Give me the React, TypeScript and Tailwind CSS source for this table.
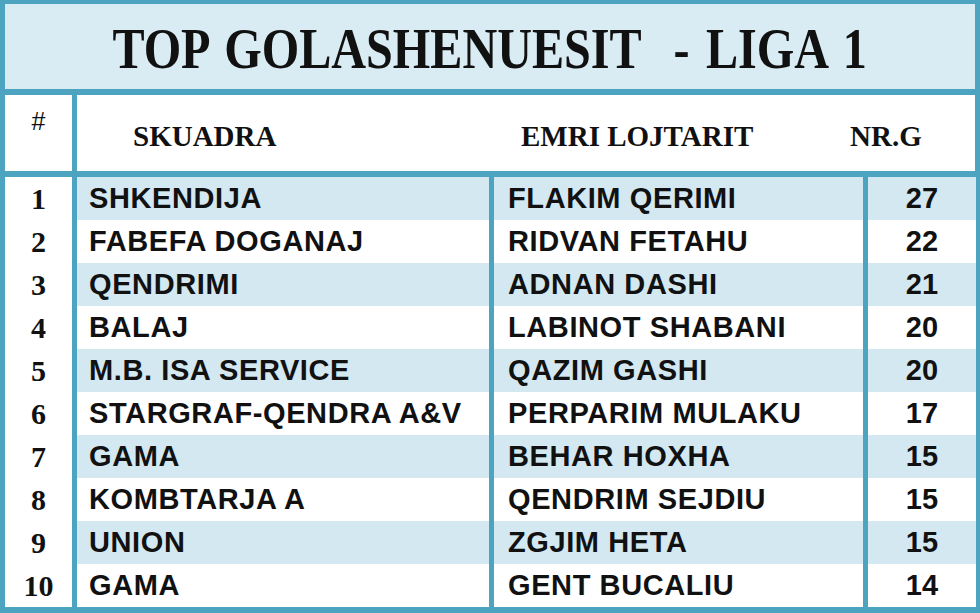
const rows = [
  { n: 1, team: 'SHKENDIJA', player: 'FLAKIM QERIMI', goals: 27 },
  { n: 2, team: 'FABEFA DOGANAJ', player: 'RIDVAN FETAHU', goals: 22 },
  { n: 3, team: 'QENDRIMI', player: 'ADNAN DASHI', goals: 21 },
  { n: 4, team: 'BALAJ', player: 'LABINOT SHABANI', goals: 20 },
  { n: 5, team: 'M.B. ISA SERVICE', player: 'QAZIM GASHI', goals: 20 },
  { n: 6, team: 'STARGRAF-QENDRA A&V', player: 'PERPARIM MULAKU', goals: 17 },
  { n: 7, team: 'GAMA', player: 'BEHAR HOXHA', goals: 15 },
  { n: 8, team: 'KOMBTARJA A', player: 'QENDRIM SEJDIU', goals: 15 },
  { n: 9, team: 'UNION', player: 'ZGJIM HETA', goals: 15 },
  { n: 10, team: 'GAMA', player: 'GENT BUCALIU', goals: 14 },
];

const serif = "font-['Liberation_Serif',serif]";
const sans = "font-['Liberation_Sans',Arial,sans-serif]";

export default function App() {
  return (
    <div className="w-[980px] h-[613px] bg-[#4ca4c1] pt-[4px] pb-[6px] px-[5px] flex flex-col text-[#111]">
      {/* title */}
      <div className={`h-[85px] shrink-0 bg-[#d9ecf3] flex items-center justify-center ${serif}`}>
        <h1 className="text-[56px] font-bold whitespace-pre leading-none pt-[4px] scale-x-[0.86] [word-spacing:5px]">
          TOP GOLASHENUESIT  - LIGA 1
        </h1>
      </div>

      {/* header */}
      <div className="mt-[6px] h-[76px] shrink-0 grid grid-cols-[67px_1fr] gap-x-[5px]">
        <div className={`bg-white flex justify-center pt-[8px] text-[25px] ${sans}`}>#</div>
        <div className={`bg-white relative text-[29px] font-bold ${serif}`}>
          <span className="absolute left-[56px] top-[20px]">SKUADRA</span>
          <span className="absolute left-[444px] top-[20px]">EMRI LOJTARIT</span>
          <span className="absolute left-[773px] top-[20px]">NR.G</span>
        </div>
      </div>

      {/* body */}
      <div className="mt-[6px] grid grid-cols-[67px_412px_369px_108px] grid-rows-[repeat(10,43px)] gap-x-[5px]">
        {rows.map((r) => {
          const stripe = r.n % 2 === 1 ? 'bg-[#d3e8f1]' : 'bg-white';
          return (
            <div key={r.n} className="contents">
              <div className={`bg-white flex items-center justify-center text-[30px] font-bold ${serif}`}>{r.n}</div>
              <div className={`${stripe} flex items-center pl-[12px] text-[29px] font-bold tracking-[0.6px] ${sans}`}>{r.team}</div>
              <div className={`${stripe} flex items-center pl-[14px] text-[29px] font-bold tracking-[0.6px] ${sans}`}>{r.player}</div>
              <div className={`${stripe} flex items-center justify-center text-[29px] font-bold ${sans}`}>{r.goals}</div>
            </div>
          );
        })}
      </div>
    </div>
  );
}
